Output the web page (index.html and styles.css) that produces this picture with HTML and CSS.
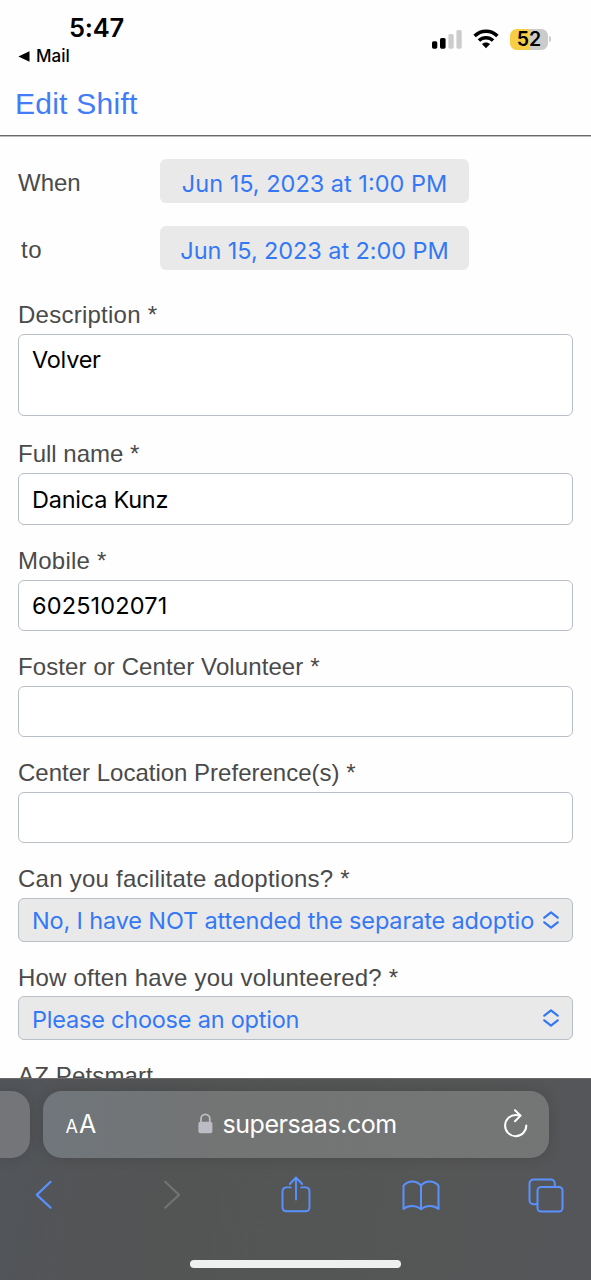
FILE: index.html
```html
<!DOCTYPE html>
<html lang="en">
<head>
<meta charset="utf-8">
<title>Edit Shift</title>
<link rel="stylesheet" href="styles.css">
</head>
<body>
<div class="phone">
  <header class="status">
    <div class="clock-block">
      <div class="clock">5:47</div>
      <div class="back-app"><svg width="12" height="11" viewBox="0 0 12 11"><path d="M11.500 .2v10.600L.4 5.5z" fill="#000"/></svg><span>Mail</span></div>
    </div>
    <div class="indicators">
      <svg class="signal" width="30" height="20" viewBox="0 0 30 20"><rect x="0" y="11.3" width="5.3" height="7.4" rx="1.6" fill="#000"/><rect x="8" y="8" width="5.6" height="10.7" rx="1.6" fill="#000"/><rect x="16.4" y="4" width="5.3" height="14.7" rx="1.6" fill="#ccc"/><rect x="24.4" y="0" width="5.3" height="18.7" rx="1.6" fill="#ccc"/></svg>
      <svg class="wifi" width="26" height="20" viewBox="0 0 26 20" fill="none" stroke="#000"><path d="M1.6 6.9C8 .6 18 .6 24.4 6.9" stroke-width="3.500"/><path d="M5.900 11.600c4-3.900 10.200-3.900 14.200 0" stroke-width="3.500"/><path d="M8.900 15.100c2.300-2.200 5.900-2.200 8.200 0L13 19.300z" fill="#000" stroke="none"/></svg>
      <div class="battery"><span>52</span></div>
      <div class="battery-tip"></div>
    </div>
  </header>
  <div class="title"><span>Edit Shift</span></div>
  <main class="form">
    <div class="date-row"><span class="label">When</span><button class="date"><span>Jun 15, 2023 at 1:00 PM</span></button></div>
    <div class="date-row"><span class="label label-to">to</span><button class="date second"><span>Jun 15, 2023 at 2:00 PM</span></button></div>
    <div class="field field-area"><div class="label loose">Description *</div><div class="box area">Volver</div></div>
    <div class="field field-name"><div class="label">Full name *</div><div class="box">Danica Kunz</div></div>
    <div class="field"><div class="label loose">Mobile *</div><div class="box digits">6025102071</div></div>
    <div class="field"><div class="label semi">Foster or Center Volunteer *</div><div class="box"></div></div>
    <div class="field"><div class="label">Center Location Preference(s) *</div><div class="box"></div></div>
    <div class="field field-select"><div class="label loose">Can you facilitate adoptions? *</div>
      <div class="box select"><span class="value">No, I have NOT attended the separate adoptio</span><svg width="16" height="18" viewBox="0 0 16 18"><path d="M1.3 6.7 8 1.4l6.7 5.3M1.3 11.3 8 16.6l6.7-5.3" fill="none" stroke="#3478f6" stroke-width="2.2" stroke-linecap="round" stroke-linejoin="round"/></svg></div></div>
    <div class="field field-select last"><div class="label medium">How often have you volunteered? *</div>
      <div class="box select"><span class="value option">Please choose an option</span><svg width="16" height="18" viewBox="0 0 16 18"><path d="M1.3 6.7 8 1.4l6.7 5.3M1.3 11.3 8 16.6l6.7-5.3" fill="none" stroke="#3478f6" stroke-width="2.2" stroke-linecap="round" stroke-linejoin="round"/></svg></div></div>
    <div class="label clipped">AZ Petsmart</div>
  </main>
  <footer class="browser">
    <div class="tabs">
      <div class="prev-tab"></div>
      <div class="address">
        <div class="reader"><span class="small-a">A</span><span class="big-a">A</span></div>
        <div class="site">
          <svg width="15" height="21" viewBox="0 0 15 21"><path d="M3 10V5.7a4.4 4.4 0 0 1 8.8 0V10" fill="none" stroke="#bdbbc3" stroke-width="1.8"/><rect x=".4" y="8.7" width="14" height="11.6" rx="2" fill="#bdbbc3"/></svg>
          <span>supersaas.com</span>
        </div>
        <svg class="reload" width="26" height="30" viewBox="0 0 26 30" fill="none" stroke="#fff" stroke-width="2" stroke-linecap="round" stroke-linejoin="round"><path d="M23.300 16.500A10.600 10.600 0 1 1 12.700 6q2.200 0 4.500.5"/><path d="m12 1.200 5.600 5.400L12 12.300"/></svg>
      </div>
    </div>
    <nav class="tools">
      <svg class="back" width="18" height="30" viewBox="0 0 18 30" fill="none" stroke="#5a91ff" stroke-width="2.2" stroke-linecap="round" stroke-linejoin="round"><path d="M15.600 1.800 1.800 14.900l13.800 12.800"/></svg>
      <svg class="forward" width="18" height="30" viewBox="0 0 18 30" fill="none" stroke="#717272" stroke-width="2.200" stroke-linecap="round" stroke-linejoin="round"><path d="M2.200 1.800 16 14.900l-13.800 12.800"/></svg>
      <svg class="share" width="30" height="38" viewBox="0 0 30 38" fill="none" stroke="#5a91ff" stroke-width="1.900" stroke-linecap="round" stroke-linejoin="round"><path d="M9.800 11.400H5.200a3.700 3.700 0 0 0-3.700 3.700v16.500a3.700 3.700 0 0 0 3.700 3.700h19.600a3.700 3.700 0 0 0 3.700-3.700V15.100a3.700 3.700 0 0 0-3.700-3.700h-4.600M15 23.500V1.700M8.800 8 15 1.500 21.200 8"/></svg>
      <svg class="book" width="38" height="32" viewBox="0 0 38 32" fill="none" stroke="#5a91ff" stroke-width="2" stroke-linecap="round" stroke-linejoin="round"><path d="M19 5.700C16.700 2.600 13.700 1.500 10.400 1.500 6.500 1.500 3.500 3.200 1.500 5.700V29c2.300-2 5.100-3 8.300-3 3.700 0 6.700 1 9.200 3.300C21.500 27 24.500 26 28.200 26c3.200 0 6 1 8.300 3V5.700C34.500 3.200 31.500 1.500 27.600 1.500 24.300 1.500 21.300 2.600 19 5.700zM19 5.700v23.600"/></svg>
      <svg class="copies" width="36" height="36" viewBox="0 0 36 36" fill="none" stroke="#5a91ff" stroke-width="2"><path d="M9.300 26.200H5.500a4 4 0 0 1-4-4V5.500a4 4 0 0 1 4-4h17.300a4 4 0 0 1 4 4v3.300"/><rect x="9.500" y="9" width="25" height="24.500" rx="3.500"/></svg>
    </nav>
    <div class="home-bar"></div>
  </footer>
</div>
</body>
</html>
```
FILE: styles.css
```css
* { box-sizing: border-box; }
body { margin: 0; background: #fefefe; }
svg { display: block; flex: none; }
.phone { width: 591px; height: 1280px; overflow: hidden; display: flex; flex-direction: column; font-family: Inter, sans-serif; color: #000; }
.status { height: 72px; display: flex; justify-content: space-between; padding-left: 18px; padding-right: 41px; flex: none; }
.clock { font-size: 25.500px; font-weight: 600; line-height: 30px; margin: 13px 0 0 51px; letter-spacing: -.2px; }
.back-app { display: flex; align-items: center; gap: 6px; font-size: 17px; font-weight: 500; line-height: 20px; margin-top: 3px; letter-spacing: 0; }
.indicators { display: flex; align-items: flex-start; padding-top: 29px; }
.signal { margin-top: 1px; margin-right: 11px; }
.wifi { margin-right: 11px; }
.battery { width: 38px; height: 21px; border-radius: 6.500px; background: linear-gradient(90deg, #f8cd46 53%, #cbcbcb 53%); text-align: center; font-size: 19.500px; line-height: 21px; font-weight: 600; }
.battery-tip { width: 2px; height: 6px; margin: 7px -1px 0 1px; border-radius: 0 3px 3px 0; background: #ccc; }
.title { height: 64px; flex: none; padding: 14px 0 0 15px; border-bottom: 1px solid #6a696b; box-shadow: 0 1px 0 #bcbbbd; font: 30px/35px "Liberation Sans", sans-serif; color: #427cf7; letter-spacing: .25px; }
.form { flex: none; height: 942px; padding: 23px 18px 0; overflow: hidden; display: flex; flex-direction: column; }
.label { font: 24px/28px "Liberation Sans", sans-serif; color: #4a4a4a; white-space: nowrap; }
.loose { letter-spacing: .25px; }
.medium { letter-spacing: .2px; }
.semi { letter-spacing: .1px; }
.date-row { display: grid; grid-template-columns: 142px 309px; align-items: center; height: 44px; margin-bottom: 23px; flex: none; }
.date-row .label { padding-top: 3px; }
.date-row .label-to { padding-left: 3px; letter-spacing: .6px; }
.date { border: 0; padding: 3px 0 0; height: 44px; border-radius: 6px; background: #e9e9e9; color: #3478f6; font: 23.500px/41px Inter, sans-serif; white-space: nowrap; }
.date span { display: block; padding-top: 1px; }
.second { letter-spacing: -.08px; }
.field { height: 106px; flex: none; }
.field .label { margin-bottom: 5px; }
.field-area { height: 139px; margin-top: 8px; }
.field-name { height: 107px; }
.field-select { height: 98px; }
.field-select.last .label { padding-top: 1px; line-height: 27px; }
.box { height: 51px; border: 1.500px solid #b9bfc7; border-radius: 6px; padding: 0 13px; font-size: 23.500px; letter-spacing: -.25px; line-height: 50px; white-space: nowrap; background: #fff; }
.field-name .box { height: 52px; line-height: 52px; }
.digits { letter-spacing: .15px; }
.area { height: 82px; }
.select { height: 44px; background: #e9e9e9; color: #3478f6; display: flex; align-items: center; justify-content: space-between; line-height: 42px; padding-right: 13px; letter-spacing: -.14px; }
.value { width: 503px; overflow: hidden; padding-top: 2px; }
.last .select { line-height: 43px; }
.option { letter-spacing: -.22px; }
.clipped { flex: none; padding-top: 1px; letter-spacing: .15px; }
.browser { height: 203px; flex: none; background: linear-gradient(100deg, #52555a 0, #535454 30%, #555656 75%, #54565a 100%); border-top: 1px solid #696969; }
.tabs { display: flex; gap: 12.500px; padding-top: 11.500px; height: 79px; }
.prev-tab { width: 30px; height: 67px; border-radius: 0 19px 19px 0; background: #737578; flex: none; box-shadow: 0 0 14px rgba(0,0,0,.14); }
.address { width: 506px; height: 67px; border-radius: 19px; background: linear-gradient(90deg, #70767b, #737474 35%, #747575); box-shadow: 0 0 14px rgba(0,0,0,.14); display: flex; align-items: center; color: #fff; padding: 0 20px 0 23px; }
.reader { width: 132px; display: flex; align-items: baseline; }
.small-a { font-size: 18px; }
.big-a { font-size: 25px; margin-left: 1px; }
.site { display: flex; align-items: center; gap: 10px; font-size: 25px; letter-spacing: -.45px; }
.site svg { margin-top: -1px; }
.reload { margin-left: auto; margin-top: -1px; }
.tools { height: 82px; display: flex; align-items: flex-start; padding: 18px 28px 0 35px; }
.back { margin-top: 4px; }
.forward { margin: 4px 0 0 110px; }
.share { margin: 0 0 0 100px; }
.book { margin: 4px 0 0 91px; }
.copies { margin: 2px 0 0 88px; }
.home-bar { width: 211px; height: 8px; border-radius: 4px; background: #efefef; margin: 20px 0 0 190px; }
```
